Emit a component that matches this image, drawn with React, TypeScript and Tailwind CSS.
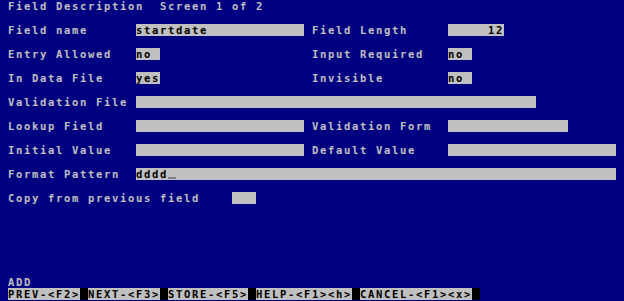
import React from 'react'

type Row = {
  label: string
  input: string
  value?: string
  right?: { label: string; input: string; value?: string; alignRight?: boolean }
  cursor?: boolean
}

const ROWS: Row[] = [
  { label: 'Field name', input: 'w-[168px]', value: 'startdate', right: { label: 'Field Length', input: 'w-[56px]', value: '12', alignRight: true } },
  { label: 'Entry Allowed', input: 'w-[24px]', value: 'no', right: { label: 'Input Required', input: 'w-[24px]', value: 'no' } },
  { label: 'In Data File', input: 'w-[24px]', value: 'yes', right: { label: 'Invisible', input: 'w-[24px]', value: 'no' } },
  { label: 'Validation File', input: 'w-[400px]' },
  { label: 'Lookup Field', input: 'w-[168px]', right: { label: 'Validation Form', input: 'w-[120px]' } },
  { label: 'Initial Value', input: 'w-[168px]', right: { label: 'Default Value', input: 'w-[168px]' } },
  { label: 'Format Pattern', input: 'w-[480px]', value: 'dddd', cursor: true },
]

const KEYS = ['PREV-<F2>', 'NEXT-<F3>', 'STORE-<F5>', 'HELP-<F1><h>', 'CANCEL-<F1><x>']

function Input({ cls, value, alignRight, cursor }: { cls: string; value?: string; alignRight?: boolean; cursor?: boolean }) {
  return (
    <span className={`flex h-[12px] shrink-0 bg-[#c0c0c0] text-black ${alignRight ? 'justify-end' : ''} ${cls}`}>
      <span className="whitespace-pre">{value}</span>
      {cursor && <span className="mt-[9px] h-[2px] w-[8px] bg-[#808080]" />}
    </span>
  )
}

export default function App() {
  return (
    <div
      className="flex h-[301px] w-[624px] flex-col overflow-hidden bg-[#000080] pb-[1px] text-[10.5px] leading-[12px] font-bold tracking-[1.68px] text-[#c0c0c0]"
      style={{ fontFamily: '"DejaVu Sans Mono", "Liberation Mono", monospace' }}
    >
      <div className="h-[12px] whitespace-pre pl-2">Field Description  Screen 1 of 2</div>

      <div className="mt-[12px] flex flex-col gap-[12px]">
        {ROWS.map((r) => (
          <div key={r.label} className="flex h-[12px] pl-2">
            <div className="flex w-[296px] shrink-0">
              <span className="w-[128px] shrink-0 whitespace-pre">{r.label}</span>
              <Input cls={r.input} value={r.value} cursor={r.cursor} />
            </div>
            {r.right && (
              <>
                <span className="ml-2 w-[136px] shrink-0 whitespace-pre">{r.right.label}</span>
                <Input cls={r.right.input} value={r.right.value} alignRight={r.right.alignRight} />
              </>
            )}
          </div>
        ))}
        <div className="flex h-[12px] pl-2">
          <span className="w-[224px] shrink-0 whitespace-pre">Copy from previous field</span>
          <Input cls="w-[24px]" />
        </div>
      </div>

      {/* footer */}
      <div className="mt-auto h-[12px] pl-2">ADD</div>
      <div className="flex h-[12px] pl-2">
        {KEYS.map((k) => (
          <React.Fragment key={k}>
            <span className="h-[12px] whitespace-pre bg-[#c0c0c0] text-black">{k}</span>
            <span className="h-[12px] w-[8px] bg-black" />
          </React.Fragment>
        ))}
      </div>
    </div>
  )
}
